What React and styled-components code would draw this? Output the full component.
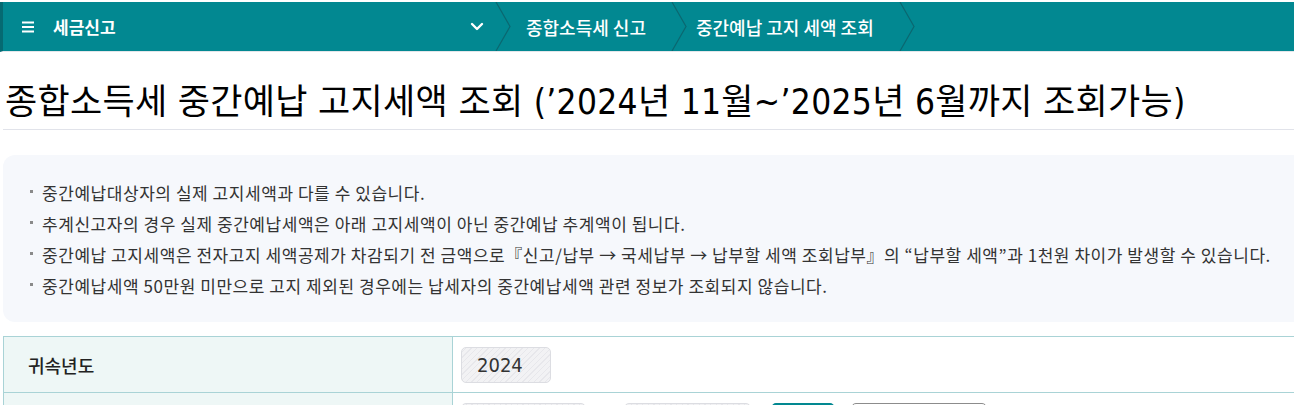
import React from "react";
import styled, { createGlobalStyle } from "styled-components";

const GlobalStyle = createGlobalStyle`
  html, body {
    margin: 0;
    padding: 0;
    background: #ffffff;
    overflow: hidden;
  }
  body {
    font-family: "Noto Sans CJK KR", "Noto Sans", sans-serif;
    color: #222;
  }
`;

const condensed = `"DejaVu Sans Condensed", "Noto Sans CJK KR", sans-serif`;

const Page = styled.div`
  width: 1294px;
  padding-top: 2px;
`;

const TopBar = styled.header`
  display: flex;
  align-items: center;
  height: 49px;
  background: #028891;
  border-left: 3px solid #056a72;
  border-bottom: 1px solid #e4e6ea;
  color: #fff;
`;

const MenuButton = styled.div`
  display: flex;
  align-items: center;
  gap: 19px;
  padding-left: 19px;
  width: 438px;
  font-size: 17px;
  font-weight: 700;
`;

const Crumbs = styled.nav`
  display: flex;
  align-items: stretch;
  height: 100%;
`;

const DropButton = styled.div`
  display: flex;
  align-items: center;
  padding: 0 11px 0 10px;
`;

const Sep = styled.svg`
  width: 16px;
  height: 49px;
  display: block;
  flex-shrink: 0;
`;

const Crumb = styled.div`
  display: flex;
  align-items: center;
  padding: 0 ${(p) => p.$pr}px 0 ${(p) => p.$pl}px;
  font-size: 18px;
  font-weight: 500;
  white-space: nowrap;
`;

const Content = styled.main`
  padding-left: 3px;
  width: 1340px;
`;

const Title = styled.h1`
  margin: 0;
  padding: 27px 0 0 2px;
  height: 50px;
  font-family: ${condensed};
  font-size: 35px;
  font-weight: 400;
  line-height: 46px;
  letter-spacing: 0.3px;
  color: #000;
  border-bottom: 1px solid #e1e3ea;
  white-space: nowrap;
`;

const InfoBox = styled.ul`
  list-style: none;
  margin: 25px 0 0;
  padding: 22px 0 21px 27px;
  background: #f6f8fc;
  border-radius: 12px;
`;

const InfoItem = styled.li`
  position: relative;
  padding-left: 12px;
  height: 31px;
  line-height: 31px;
  font-size: 17px;
  color: #333;
  letter-spacing: 0.55px;
  white-space: nowrap;

  &::before {
    content: "";
    position: absolute;
    left: 0;
    top: 13px;
    width: 3px;
    height: 3px;
    background: #8a8a8a;
  }
`;

const Table = styled.div`
  margin-top: 14px;
  border-top: 1px solid #a9d3d6;
  border-left: 1px solid #a9d3d6;
`;

const Row = styled.div`
  display: grid;
  grid-template-columns: 449px 1fr;
  height: 55px;
  border-bottom: 1px solid #a9d3d6;
`;

const Label = styled.div`
  display: flex;
  align-items: center;
  padding-left: 24px;
  background: #eef7f6;
  border-right: 1px solid #a9d3d6;
  font-size: 18px;
  font-weight: 500;
  color: #222;
`;

const Value = styled.div`
  display: flex;
  align-items: center;
  padding-left: 8px;
`;

const Field = styled.div`
  box-sizing: border-box;
  width: ${(p) => p.$w}px;
  height: 36px;
  margin-left: ${(p) => p.$ml || 0}px;
  padding-left: 15px;
  display: flex;
  align-items: center;
  border: 1px solid #dcdde2;
  border-radius: 5px;
  font-family: ${condensed};
  font-size: 20px;
  color: #333;
  background: repeating-linear-gradient(
    -45deg,
    #f2f2f4 0px,
    #f2f2f4 3px,
    #e7e7eb 3px,
    #e7e7eb 4px
  );
`;

const Button = styled.button`
  box-sizing: border-box;
  width: ${(p) => p.$w}px;
  height: 36px;
  margin-left: ${(p) => p.$ml || 0}px;
  border-radius: 5px;
  border: 1px solid ${(p) => (p.$primary ? "#028891" : "#8c8c8c")};
  background: ${(p) => (p.$primary ? "#028891" : "#fff")};
`;

function Separator() {
  return (
    <Sep viewBox="0 0 16 49">
      <polyline
        points="1,0 15,24.5 1,49"
        fill="none"
        stroke="#0b6770"
        strokeWidth="1.2"
      />
    </Sep>
  );
}

const notices = [
  "중간예납대상자의 실제 고지세액과 다를 수 있습니다.",
  "추계신고자의 경우 실제 중간예납세액은 아래 고지세액이 아닌 중간예납 추계액이 됩니다.",
  "중간예납 고지세액은 전자고지 세액공제가 차감되기 전 금액으로『신고/납부 → 국세납부 → 납부할 세액 조회납부』의 “납부할 세액”과 1천원 차이가 발생할 수 있습니다.",
  "중간예납세액 50만원 미만으로 고지 제외된 경우에는 납세자의 중간예납세액 관련 정보가 조회되지 않습니다.",
];

export default function App() {
  return (
    <Page>
      <GlobalStyle />
      <TopBar>
        <MenuButton>
          <svg width="12" height="12" viewBox="0 0 12 12">
            <rect x="0" y="0.5" width="12" height="2" fill="#fff" />
            <rect x="0" y="5" width="12" height="2" fill="#fff" />
            <rect x="0" y="9.5" width="12" height="2" fill="#fff" />
          </svg>
          세금신고
        </MenuButton>
        <Crumbs>
          <DropButton>
            <svg width="14" height="10" viewBox="0 0 14 10">
              <polyline
                points="2,2 7,7 12,2"
                fill="none"
                stroke="#fff"
                strokeWidth="2.4"
                strokeLinecap="round"
                strokeLinejoin="round"
              />
            </svg>
          </DropButton>
          <Separator />
          <Crumb $pl={15} $pr={25}>종합소득세 신고</Crumb>
          <Separator />
          <Crumb $pl={9} $pr={25}>중간예납 고지 세액 조회</Crumb>
          <Separator />
        </Crumbs>
      </TopBar>

      <Content>
        <Title>
          종합소득세 중간예납 고지세액 조회 (’2024년 11월~’2025년 6월까지 조회가능)
        </Title>

        <InfoBox>
          {notices.map((t) => (
            <InfoItem key={t}>{t}</InfoItem>
          ))}
        </InfoBox>

        <Table>
          <Row>
            <Label>귀속년도</Label>
            <Value>
              <Field $w={90}>2024</Field>
            </Value>
          </Row>
          <Row>
            <Label />
            <Value>
              <Field $w={125} />
              <Field $w={127} $ml={38} />
              <Button $w={64} $ml={20} $primary />
              <Button $w={136} $ml={16} />
            </Value>
          </Row>
        </Table>
      </Content>
    </Page>
  );
}
